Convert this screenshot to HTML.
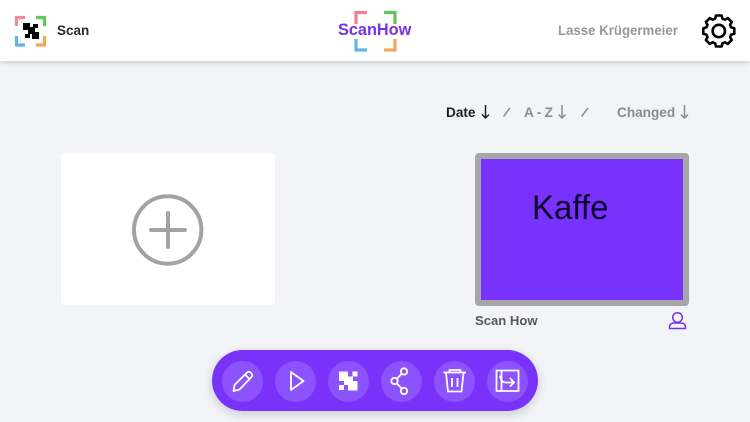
<!DOCTYPE html>
<html><head><meta charset="utf-8"><style>
html,body{margin:0;padding:0}
body{width:750px;height:422px;position:relative;overflow:hidden;background:#f3f4f7;font-family:"Liberation Sans",sans-serif}
.a{position:absolute;white-space:nowrap}
.hdr{left:0;top:0;width:750px;height:61px;background:#fff;box-shadow:0 1px 6px rgba(0,0,0,.2)}
.sort{top:104px;font-size:13.600px;font-weight:bold;line-height:17px;color:#8b8b8f}
.bar{left:212px;top:350px;width:326px;height:61px;border-radius:31px;background:#7832fa;box-shadow:0 3px 10px rgba(0,0,0,.18)}
.c{top:361px;width:41px;height:41px;border-radius:50%;background:#8c52fb}
svg{position:absolute;overflow:visible}
</style></head><body>
<div class="a hdr"></div>
<svg style="left:0;top:0" width="750" height="61" fill="none" stroke-width="3.200">
<path d="M16.500 26V17.500H25" stroke="#f58a98"/><path d="M36 17.500H44.500V26" stroke="#62c95c"/>
<path d="M16.500 36V45H25" stroke="#62b5e5"/><path d="M36 45H44.500V36" stroke="#f4a95a"/>
<g fill="#000" stroke="none"><rect x="23" y="23" width="7" height="7"/><rect x="33" y="24" width="5" height="4"/><rect x="28" y="27" width="7" height="7"/><rect x="25" y="34" width="5" height="4"/><rect x="32" y="32" width="7" height="7"/></g>
<path d="M356 24V12.500H367" stroke="#f27f8e"/><path d="M384 12.500H395V24" stroke="#5fc55a"/>
<path d="M356 39V50H367" stroke="#62b5e5"/><path d="M384 50H395V39" stroke="#f4a95a"/>
<g transform="translate(718.800 31)" stroke="#000" stroke-width="2.600" stroke-linejoin="round">
<circle r="6.200"/>
<path d="M-4.900 -11.800L-3.600 -12.400L-2.800 -15.500H2.800L3.600 -12.400L4.900 -11.800"/>
<path transform="rotate(45)" d="M-4.900 -11.800L-3.600 -12.400L-2.800 -15.500H2.800L3.600 -12.400L4.900 -11.800"/>
<path transform="rotate(90)" d="M-4.900 -11.800L-3.600 -12.400L-2.800 -15.500H2.800L3.600 -12.400L4.900 -11.800"/>
<path transform="rotate(135)" d="M-4.900 -11.800L-3.600 -12.400L-2.800 -15.500H2.800L3.600 -12.400L4.900 -11.800"/>
<path transform="rotate(180)" d="M-4.900 -11.800L-3.600 -12.400L-2.800 -15.500H2.800L3.600 -12.400L4.900 -11.800"/>
<path transform="rotate(225)" d="M-4.900 -11.800L-3.600 -12.400L-2.800 -15.500H2.800L3.600 -12.400L4.900 -11.800"/>
<path transform="rotate(270)" d="M-4.900 -11.800L-3.600 -12.400L-2.800 -15.500H2.800L3.600 -12.400L4.900 -11.800"/>
<path transform="rotate(315)" d="M-4.900 -11.800L-3.600 -12.400L-2.800 -15.500H2.800L3.600 -12.400L4.900 -11.800"/>
</g>
</svg>
<div class="a" style="left:57px;top:23px;font-size:13.500px;line-height:16px;font-weight:bold;color:#2a2a2e">Scan</div>
<div class="a" style="left:338px;top:21px;font-size:16.300px;line-height:19px;font-weight:bold;color:#7832e6">ScanHow</div>
<div class="a" style="left:558px;top:22px;font-size:14px;line-height:17px;font-weight:bold;color:#98989c;transform-origin:0 0;transform:scaleX(.945)">Lasse Krügermeier</div>

<div class="a sort" style="left:446px;color:#1e1e22">Date</div>
<div class="a sort" style="left:524px;letter-spacing:-.2px">A - Z</div>
<div class="a sort" style="left:617px">Changed</div>
<svg style="left:0;top:0" width="750" height="140" fill="none" stroke-width="1.500">
<path d="M485.500 105V118M482 114.500L485.500 118L489 114.500" stroke="#1e1e22"/>
<path d="M562 105V118M558.500 114.500L562 118L565.500 114.500" stroke="#8b8b8f"/>
<path d="M684.500 105V118M681 114.500L684.500 118L688 114.500" stroke="#8b8b8f"/>
<path d="M503.500 116.500L510 108M581.500 116.500L588 108" stroke="#8b8b8f"/>
</svg>

<div class="a" style="left:61px;top:153px;width:214px;height:152px;background:#fff;border-radius:4px"></div>
<svg style="left:0;top:0" width="300" height="300" fill="none" stroke="#a3a3a5">
<circle cx="167.700" cy="230" r="33.700" stroke-width="4"/>
<path d="M168 213V247M151 230H185" stroke-width="4" stroke-linecap="round"/>
</svg>

<div class="a" style="left:475px;top:153px;width:202px;height:141px;border:6px solid #a6a6a8;border-radius:4px;background:#7832fe"></div>
<div class="a" style="left:532px;top:187px;font-size:34px;line-height:42px;color:#0d0430;transform-origin:0 0;transform:scaleX(.97)">Kaffe</div>
<div class="a" style="left:475px;top:313px;font-size:13.100px;line-height:16px;font-weight:bold;color:#58585c">Scan How</div>
<svg style="left:0;top:0" width="750" height="340" fill="none" stroke="#7832e6" stroke-width="1.500">
<circle cx="677.500" cy="317.500" r="4.800"/>
<path d="M669.500 328.500V327C669.500 324.500 671.500 323 674 323H681C683.500 323 685.500 324.500 685.500 327V328.500Z"/>
</svg>

<div class="a bar"></div>
<div class="a c" style="left:222px"></div>
<div class="a c" style="left:275px"></div>
<div class="a c" style="left:328px"></div>
<div class="a c" style="left:381px"></div>
<div class="a c" style="left:434px"></div>
<div class="a c" style="left:487px"></div>
<svg style="left:0;top:0" width="750" height="422" fill="none" stroke="#fff" stroke-width="1.800" stroke-linejoin="round">
<path d="M233.500 391L234.500 385L247 372.500C248 371.500 249.500 371.500 250.500 372.500L251.500 373.500C252.500 374.500 252.500 376 251.500 377L239.500 389.500ZM245 374.500L249.500 379"/>
<path d="M291 372V390L303.500 381Z"/>
<g fill="#fff" stroke="none"><rect x="339" y="371.500" width="9" height="9.500"/><rect x="352.500" y="371.500" width="5" height="5"/><rect x="348" y="376.500" width="5" height="5"/><rect x="344" y="381" width="4" height="4"/><rect x="339" y="385" width="5" height="5"/><rect x="348" y="381" width="9.500" height="9.500"/></g>
<circle cx="404" cy="371.500" r="3.200"/><circle cx="394.500" cy="381" r="3.200"/><circle cx="404" cy="391" r="3.200"/>
<path d="M396.800 378.700L401.700 373.800M396.800 383.300L401.700 388.700"/>
<path d="M443.500 372.500H466M449.500 372V370H460.500V372M446 373L448 391.500H461.500L463.500 373M452 378V387M457.500 378V387"/>
<path d="M501.500 370.500H496.500V391H501.500M501.500 370.500H518.500V391H501.500ZM500 375.500C500.500 379.500 502.500 382.500 506 382.500H513.500M510 378L514 382.500L510 386.500"/>
</svg>
</body></html>
